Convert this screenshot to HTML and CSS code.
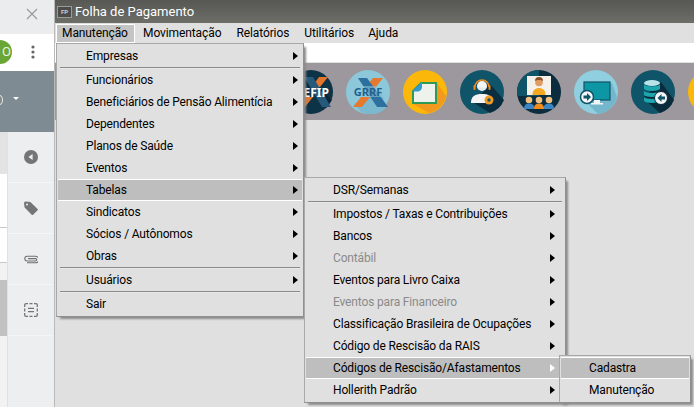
FILE: index.html
```html
<!DOCTYPE html>
<html lang="pt-BR">
<head>
<meta charset="utf-8">
<title>Folha de Pagamento</title>
<link rel="stylesheet" href="styles.css">
</head>
<body>
<div class="screen">
  <aside class="left">
    <div class="tabbar">
      <svg class="close" width="12" height="12" viewBox="0 0 12 12"><path d="M1 1l10 10M11 1L1 11" stroke="#9a9a9a" stroke-width="1.2" fill="none"/></svg>
    </div>
    <div class="urlbar">
      <span class="avatar">O</span>
      <svg class="dots" width="4" height="14" viewBox="0 0 4 14"><circle cx="2" cy="2" r="1.6" fill="#666"/><circle cx="2" cy="7" r="1.6" fill="#666"/><circle cx="2" cy="12" r="1.6" fill="#666"/></svg>
    </div>
    <div class="band">
      <span class="ring"></span>
      <span class="caret"></span>
    </div>
    <div class="lower">
      <div class="list">
        <div class="list-top"></div>
        <div class="list-row r1"></div>
        <div class="list-row r2"></div>
        <div class="list-arrow"></div>
        <div class="thumb"></div>
      </div>
      <div class="side">
        <div class="cell">
          <svg width="14" height="14" viewBox="0 0 14 14"><circle cx="7" cy="7" r="7" fill="#757575"/><path d="M8.6 4v6L4.4 7z" fill="#eceef0"/></svg>
        </div>
        <div class="cell">
          <svg width="14" height="14" viewBox="0 0 14 14"><path d="M0 2.400A1.800 1.800 0 0 1 2 .6l4.400.4 7.200 6.900a1 1 0 0 1 0 1.400l-4.500 4.400a1 1 0 0 1-1.400 0L.6 6.600z" fill="#757575"/><circle cx="3" cy="3.400" r="1" fill="#eceef0"/></svg>
        </div>
        <div class="cell">
          <svg width="14" height="9" viewBox="0 0 14 9"><path d="M4 3.600h7.500a1.200 1.200 0 0 1 0 2.400H3.200a2.200 2.200 0 0 1 0-4.800h8.200a3.300 3.300 0 0 1 0 6.600H3" stroke="#707070" stroke-width="1.100" fill="none"/></svg>
        </div>
        <div class="cell">
          <svg width="14" height="14" viewBox="0 0 14 14"><path d="M4 .7H2A1.300 1.300 0 0 0 .7 2v2M10 .7h2A1.300 1.300 0 0 1 13.300 2v2M4 13.300H2A1.300 1.300 0 0 1 .7 12v-2M10 13.300h2a1.300 1.300 0 0 0 1.300-1.300v-2M4 5.300h6M4 8.700h6M.7 5.500v3M13.300 5.500v3M5.500 .7h3M5.500 13.300h3" stroke="#757575" stroke-width="1.300" fill="none"/></svg>
        </div>
      </div>
    </div>
  </aside>

  <main class="app">
    <header class="titlebar">
      <span class="appicon">FP</span>
      <span class="apptitle">Folha de Pagamento</span>
    </header>
    <nav class="menubar">
      <span class="top-item active">Manutenção</span>
      <span class="top-item t2">Movimentação</span>
      <span class="top-item t3">Relatórios</span>
      <span class="top-item t4">Utilitários</span>
      <span class="top-item t5">Ajuda</span>
    </nav>
    <div class="whitebar"></div>
    <div class="toolbar">
      <svg class="tool" width="44" height="44" viewBox="0 0 44 44"><circle cx="22" cy="22" r="22" fill="#0d3346"/><path d="M12 8l9 0 22 22-6 8z" fill="#0a2636"/><path d="M30 7h9l-8 10h-8zM16 27h8l-8 10H8z" fill="#e5752b"/><path d="M15 7h9l18 30h-9z" fill="#27597a"/><text x="40" y="27" class="fip">EFIP</text></svg>
      <svg class="tool" width="44" height="44" viewBox="0 0 44 44"><circle cx="22" cy="22" r="22" fill="#8cc8d9"/><path d="M35 20l5 18a22 22 0 0 1-25 4l-7-8z" fill="#7cb9cf"/><path d="M27 8h10l-8 10H19zM15 27h9l-8 10H7z" fill="#e5792f"/><path d="M12 8h9l21 29H31z" fill="#2d6f9f"/><rect x="6" y="16" width="32" height="11" fill="#8cc8d9" opacity=".55"/><text x="22" y="26" class="grrf">GRRF</text></svg>
      <svg class="tool" width="44" height="44" viewBox="0 0 44 44"><circle cx="22" cy="22" r="22" fill="#fbb80a"/><path d="M34 13L43 26A22 22 0 0 1 26 43L10 34z" fill="#f19a1e"/><path d="M18 13H33V33H10V21z" fill="#eef2ec" stroke="#2f9a54" stroke-width="2"/><path d="M19 11.500L9 21.500h5c3 0 5-2 5-5z" fill="#2f9ad0"/><path d="M9 11h9L9 20z" fill="#fbb80a"/></svg>
      <svg class="tool" width="44" height="44" viewBox="0 0 44 44"><circle cx="22" cy="22" r="22" fill="#0f5468"/><path d="M30 14l14 16a22 22 0 0 1-14 13L14 33z" fill="#0a2e40"/><path d="M15 17a7 7 0 0 1 14 0" stroke="#f08a1d" stroke-width="1.600" fill="none"/><circle cx="22" cy="16" r="5" fill="#f4f4f4"/><path d="M17 17c2 1 8 1 10 0-1 4-9 4-10 0z" fill="#dfe7ea"/><rect x="13.500" y="15" width="2" height="5" rx="1" fill="#f08a1d"/><rect x="28.500" y="15" width="2" height="5" rx="1" fill="#f08a1d"/><path d="M11 33c0-7 4-9 11-9s8 2 9 4v5z" fill="#f4f4f4"/><circle cx="29" cy="30" r="4.500" fill="#f29a1f"/><circle cx="29" cy="30" r="1.700" fill="#0f5468"/></svg>
      <svg class="tool" width="44" height="44" viewBox="0 0 44 44"><circle cx="22" cy="22" r="22" fill="#0b2d3d"/><path d="M0 22A22 22 0 0 1 22 0v26H0z" fill="#0f5468"/><rect x="10" y="6" width="24" height="19" fill="#f3f1ea"/><circle cx="22" cy="12.500" r="3.800" fill="#e09a62"/><path d="M18 11a4 4 0 0 1 8 0c-2-1.500-6-1.500-8 0z" fill="#8f4e25"/><path d="M15.500 25c0-5 3-7 6.500-7s6.500 2 6.500 7z" fill="#f7a823"/><circle cx="12" cy="30" r="3.300" fill="#f0c080"/><circle cx="22" cy="30" r="3.300" fill="#f0c080"/><circle cx="32" cy="30" r="3.300" fill="#f0c080"/><path d="M7 39c0-4 2-5.500 5-5.500s4 1 5 2.500l0 3z" fill="#3d86c6"/><path d="M17 39c0-4 2-5.500 5-5.500s5 1.500 5 5.500z" fill="#f28c1c"/><path d="M27 39l0-3c1-1.500 2-2.500 5-2.500s5 1.500 5 5.500z" fill="#3d86c6"/></svg>
      <svg class="tool" width="44" height="44" viewBox="0 0 44 44"><circle cx="22" cy="22" r="22" fill="#8fcfdf"/><path d="M38 13l5 14a22 22 0 0 1-19 17L10 30z" fill="#74b6cb"/><rect x="10" y="12" width="26" height="18" fill="#0d96a3" stroke="#0f5468" stroke-width="1.200"/><rect x="20" y="30" width="6" height="3" fill="#f2f5f5"/><rect x="17" y="33" width="12" height="1.500" fill="#f2f5f5"/><circle cx="13" cy="27" r="6.500" fill="#f4f7f7" stroke="#0f5468" stroke-width="1.500"/><path d="M9.500 25.500h3.500V23l4 4-4 4v-2.500H9.500z" fill="#0f5468"/></svg>
      <svg class="tool" width="44" height="44" viewBox="0 0 44 44"><circle cx="22" cy="22" r="22" fill="#0f5468"/><path d="M30 12l13 18a22 22 0 0 1-14 13L12 28z" fill="#0a2b3b"/><ellipse cx="21" cy="13" rx="8" ry="3" fill="#b9e3ea"/><path d="M13 14.500c2 2.500 14 2.500 16 0V19c-2 2.500-14 2.500-16 0zM13 21c2 2.500 14 2.500 16 0v4c-2 2.500-14 2.500-16 0zM13 27c2 2.500 14 2.500 16 0v4c-2 2.500-14 2.500-16 0z" fill="#1ca6ae"/><circle cx="30" cy="28" r="6.500" fill="#f4f7f7" stroke="#0a2b3b" stroke-width="1"/><path d="M34 26.500h-3.500V24l-4 4 4 4v-2.500H34z" fill="#0f5468"/></svg>
      <svg class="tool" width="44" height="44" viewBox="0 0 44 44"><circle cx="22" cy="22" r="22" fill="#fbb80a"/></svg>
    </div>
    <div class="workspace"></div>

    <div class="menu menu-main">
      <div class="item"><span>Empresas</span><i class="arr"></i></div>
      <div class="sep"></div>
      <div class="item"><span>Funcionários</span><i class="arr"></i></div>
      <div class="item"><span>Beneficiários de Pensão Alimentícia</span><i class="arr"></i></div>
      <div class="item"><span>Dependentes</span><i class="arr"></i></div>
      <div class="item"><span>Planos de Saúde</span><i class="arr"></i></div>
      <div class="item"><span>Eventos</span><i class="arr"></i></div>
      <div class="item hl"><span>Tabelas</span><i class="arr"></i></div>
      <div class="item"><span>Sindicatos</span><i class="arr"></i></div>
      <div class="item"><span>Sócios / Autônomos</span><i class="arr"></i></div>
      <div class="item"><span>Obras</span><i class="arr"></i></div>
      <div class="sep"></div>
      <div class="item"><span>Usuários</span><i class="arr"></i></div>
      <div class="sep"></div>
      <div class="item"><span>Sair</span></div>
    </div>

    <div class="menu menu-sub">
      <div class="item"><span>DSR/Semanas</span><i class="arr"></i></div>
      <div class="sep"></div>
      <div class="item"><span>Impostos / Taxas e Contribuições</span><i class="arr"></i></div>
      <div class="item"><span>Bancos</span><i class="arr"></i></div>
      <div class="item off"><span>Contábil</span><i class="arr"></i></div>
      <div class="item"><span>Eventos para Livro Caixa</span><i class="arr"></i></div>
      <div class="item off"><span>Eventos para Financeiro</span><i class="arr"></i></div>
      <div class="item"><span>Classificação Brasileira de Ocupações</span><i class="arr"></i></div>
      <div class="item"><span>Código de Rescisão da RAIS</span><i class="arr"></i></div>
      <div class="item hl"><span>Códigos de Rescisão/Afastamentos</span><i class="arr white"></i></div>
      <div class="item"><span>Hollerith Padrão</span><i class="arr"></i></div>
    </div>

    <div class="menu menu-leaf">
      <div class="item hl"><span>Cadastra</span></div>
      <div class="item"><span>Manutenção</span></div>
    </div>
  </main>
</div>
</body>
</html>
```

FILE: styles.css
```css
* { box-sizing: border-box; }
html, body { margin: 0; padding: 0; }
body { width: 694px; height: 407px; overflow: hidden; background: #e0e0e0; font-family: Roboto, "Noto Sans", sans-serif; }
.screen { display: flex; width: 694px; height: 407px; overflow: hidden; }

.left { width: 55px; flex: none; display: flex; flex-direction: column; border-right: 1px solid #b9b9b9; background: #eceef0; }
.tabbar { height: 34px; background: #eaecee; padding: 8px 0 0 26px; flex: none; }
.close { display: block; }
.urlbar { height: 37px; background: #fff; flex: none; position: relative; display: flex; align-items: center; padding-left: 31px; }
.avatar { position: absolute; left: -12px; top: 6px; width: 24px; height: 24px; border-radius: 50%; background: #6aa636; color: #e8f2e0; font-size: 13px; line-height: 24px; text-align: right; padding-right: 1px; overflow: hidden; }
.dots { display: block; margin-top: -1px; }
.band { height: 61px; background: #7f8b92; flex: none; position: relative; }
.ring { position: absolute; left: -4px; top: 24px; width: 7px; height: 10px; border: 1.500px solid #f0e8d8; border-radius: 50%; }
.caret { position: absolute; left: 13px; top: 26px; width: 0; height: 0; border-left: 3px solid transparent; border-right: 3px solid transparent; border-top: 3px solid #fff; }
.lower { flex: 1; display: flex; min-height: 0; }
.list { width: 8px; flex: none; background: #f2f2f2; display: flex; flex-direction: column; border-right: 1px solid #dfe1e3; }
.list-top { height: 42px; background: #e3e3e3; flex: none; }
.list-row { flex: none; background: #fff; border-bottom: 1px solid #c8c8c8; }
.r1 { height: 54px; }
.r2 { height: 35px; }
.list-arrow { height: 17px; flex: none; }
.thumb { height: 56px; background: #c1c1c1; flex: none; }
.side { flex: 1; background: #eceef0; display: flex; flex-direction: column; }
.cell { height: 51px; flex: none; display: flex; align-items: center; justify-content: center; border-bottom: 1px solid #f4f5f6; }

.app { flex: 1; position: relative; display: flex; flex-direction: column; min-width: 0; background: #e0e0e0; }
.titlebar { height: 23px; flex: none; background: linear-gradient(#575753, #6d6e68); display: flex; align-items: center; gap: 3px; padding-left: 2px; }
.appicon { width: 15px; height: 12px; background: #4c4c4c; border: 1px solid #9a9a9a; color: #cfcfcf; font-size: 6px; font-weight: 700; line-height: 10px; text-align: center; }
.apptitle { color: #fff; font-size: 13px; }
.menubar { height: 20px; flex: none; background: #e0e0e0; display: flex; align-items: center; padding-left: 1px; font-size: 12px; letter-spacing: -.1px; color: #000; }
.top-item { height: 19px; line-height: 18px; white-space: nowrap; }
.top-item.active { width: 79px; background: #c4c4c4; outline: 1px solid #fff; outline-offset: -1px; padding-left: 6px; }
.t2 { margin-left: 8px; }
.t3 { margin-left: 15px; }
.t4 { margin-left: 15px; }
.t5 { margin-left: 14px; }
.whitebar { height: 20px; flex: none; background: #fff; border-bottom: 1px solid #e0e0e0; }
.toolbar { height: 57px; flex: none; background: #9d989d; display: flex; align-items: center; gap: 13px; padding-left: 234px; overflow: hidden; }
.tool { display: block; flex: none; }
.fip { font: 700 12px "Noto Sans", sans-serif; fill: #fff; text-anchor: end; }
.grrf { font: 700 11px "Noto Sans", sans-serif; fill: #21608f; text-anchor: middle; }
.workspace { flex: 1; background: #e0e0e0; }

.menu { position: absolute; background: #e0e0e0; border: 1px solid #a8a8a8; border-right-color: #8f8f8f; border-bottom-color: #8f8f8f; padding: 1px; font-size: 12px; letter-spacing: -.15px; color: #000; box-shadow: 3px 3px 2px -1px #8c8c8c; }
.menu-main { left: 1px; top: 43px; width: 248px; }
.menu-sub { left: 249px; top: 177px; width: 262px; }
.menu-leaf { left: 504px; top: 355px; width: 132px; }
.item { height: 22px; display: flex; align-items: center; padding-left: 28px; white-space: nowrap; }
.menu-sub .item { padding-left: 27px; }
.item > span { flex: 1; line-height: 22px; }
.item.off { color: #8a8a8a; }
.item.hl { background: #bebebe; box-shadow: inset 0 1px 0 #fff, inset 0 -1px 0 #fff; }
.sep { height: 2px; margin: 0 2px; border-top: 1px solid #8a8a8a; border-bottom: 1px solid #e8e8e8; }
.arr { width: 0; height: 0; border-top: 4px solid transparent; border-bottom: 4px solid transparent; border-left: 5px solid #000; margin-right: 4px; flex: none; }
.menu-sub .arr { margin-right: 9px; }
.arr.white { border-left-color: #fff; }
```
